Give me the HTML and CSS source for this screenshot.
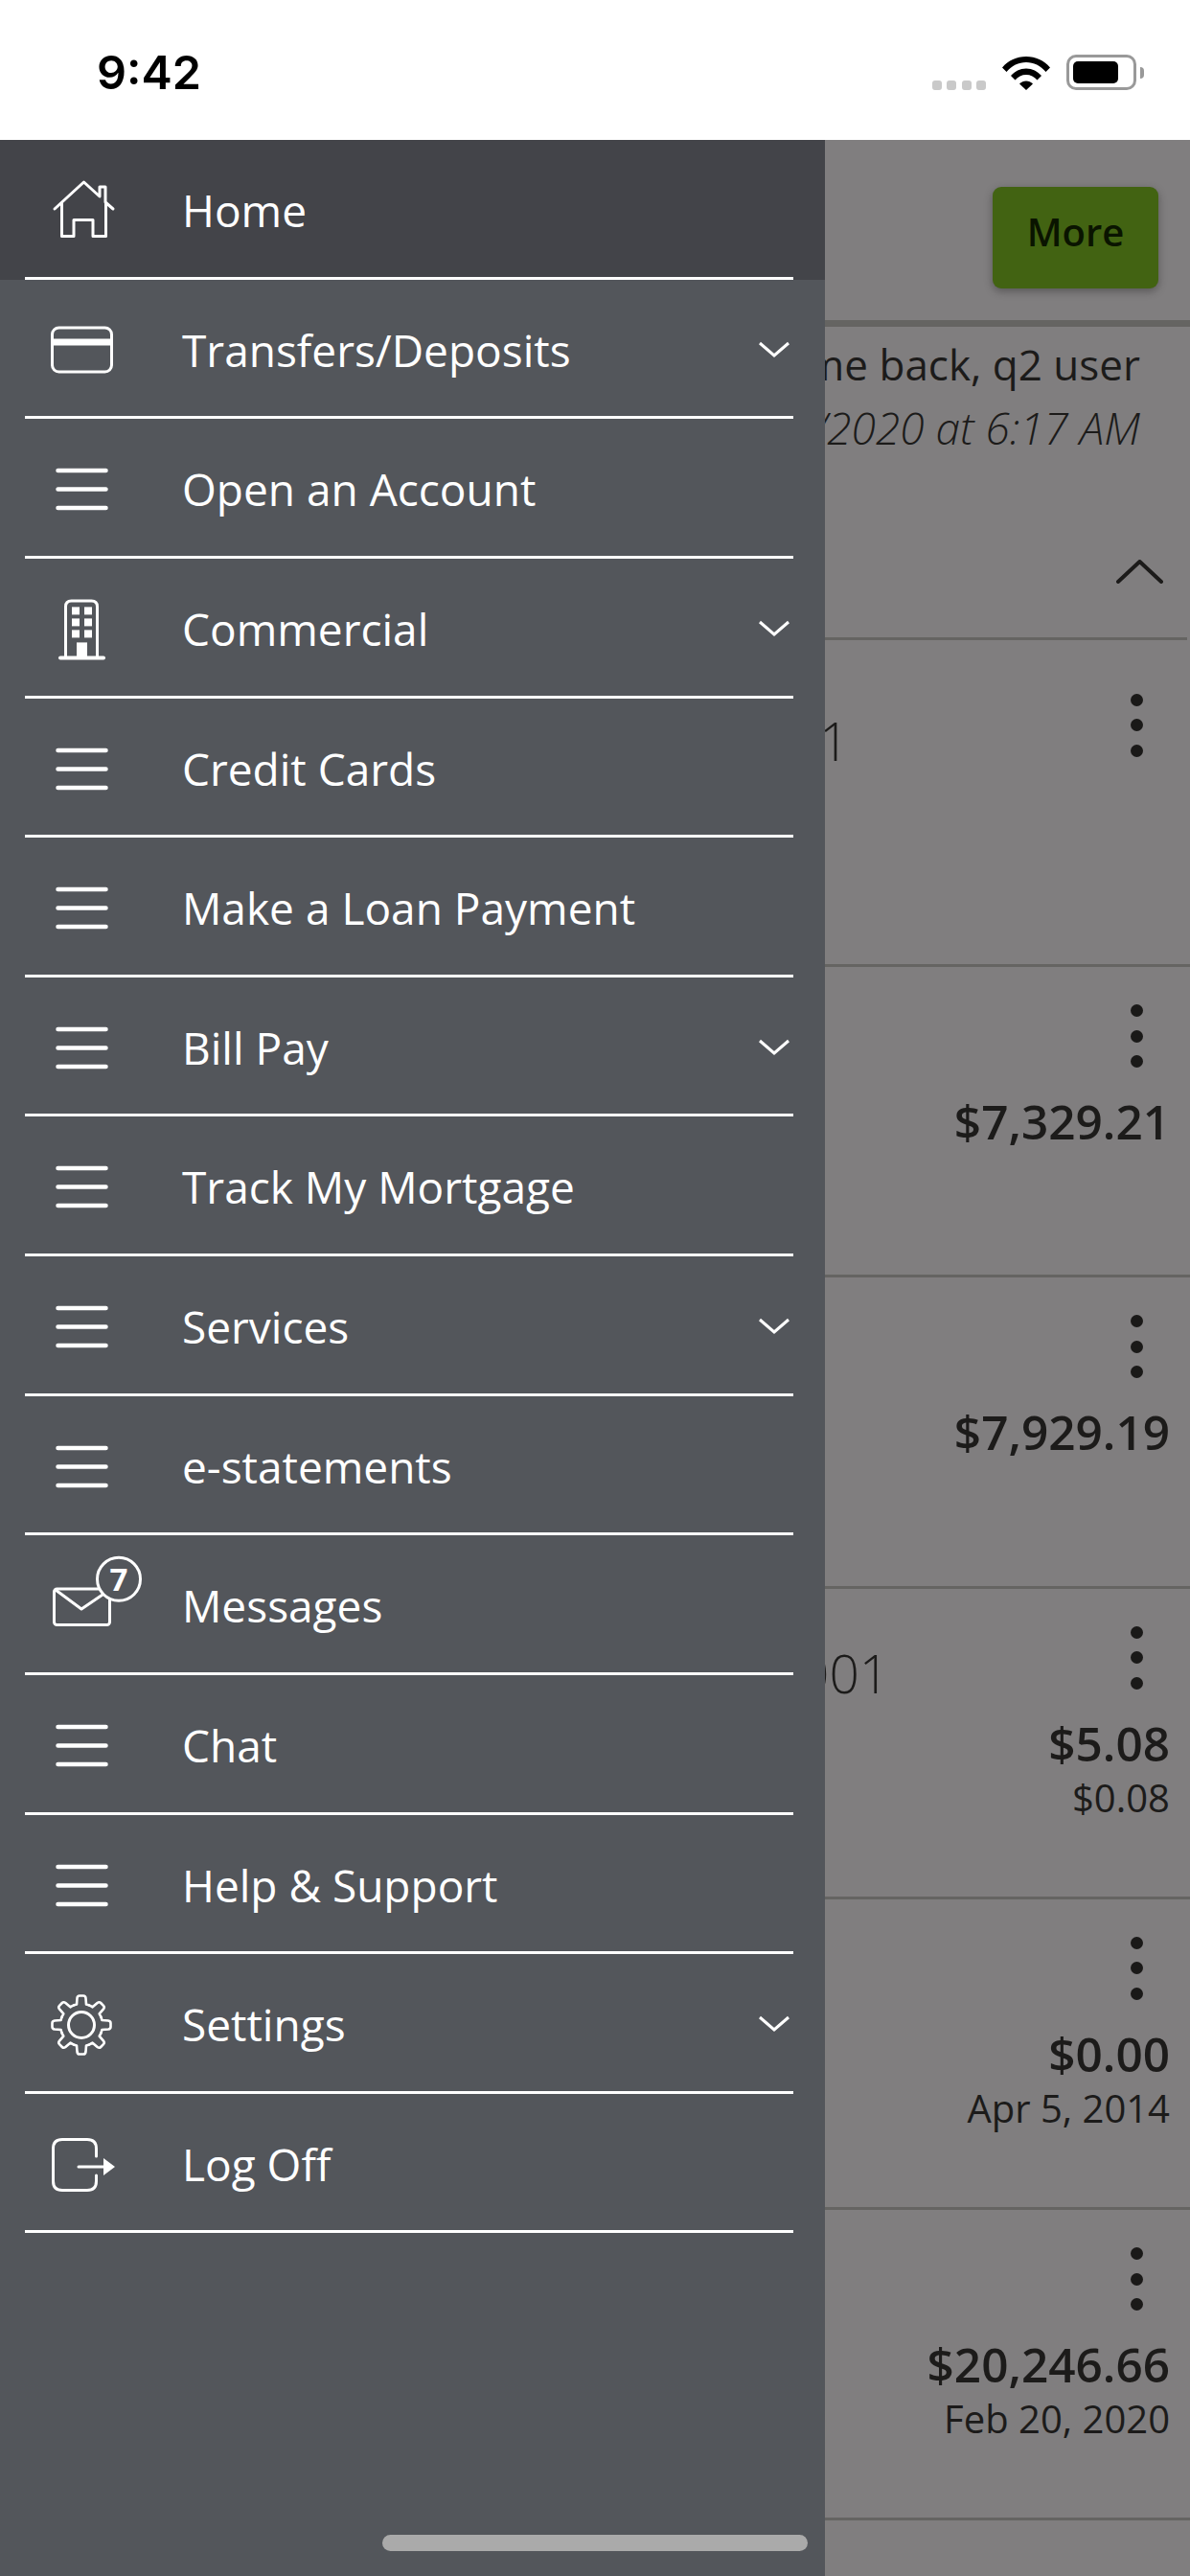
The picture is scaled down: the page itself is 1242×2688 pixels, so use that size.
FILE: index.html
```html
<!DOCTYPE html>
<html lang="en">
<head>
<meta charset="utf-8">
<title>Menu</title>
<link rel="stylesheet" href="styles.css">
</head>
<body>
<div class="screen">
  <header class="status">
    <span class="time">9:42</span>
    <div class="status-icons">
      <div class="signal"><i></i><i></i><i></i><i></i></div>
      <svg class="wifi" width="50" height="37" viewBox="0 0 50 37"><path d="M0 13.5C6.500 6 15 2 25 2s18.500 4 25 11.500l-4.500 4.500C40 11.500 33 8 25 8S10 11.500 4.500 18z"/><path d="M9 22c4-4.500 9.500-7.500 16-7.500S37 17.500 41 22l-4.500 4.500C33.500 23 29.500 21 25 21s-8.500 2-11.500 5.500z"/><path d="M18 30.500c2-1.800 4.300-3 7-3s5 1.200 7 3L25 37z"/></svg>
      <div class="battery"><span class="battery-fill"></span></div>
      <span class="battery-nub"></span>
    </div>
  </header>
  <div class="app">
    <main class="content">
      <div class="topbar"><button class="more">More</button></div>
      <div class="welcome">
        <p class="welcome-name">Welcome back, q2 user</p>
        <p class="welcome-date">/2020 at 6:17 AM</p>
      </div>
      <div class="group-head">
        <svg width="49" height="25" viewBox="0 0 49 25"><path class="chev-dark" d="M2 23L24.500 2L47 23"/></svg>
      </div>
      <section class="acct acct-first">
        <div class="acct-name">1</div>
        <div class="acct-side"><span class="kebab"><i></i><i></i><i></i></span></div>
      </section>
      <section class="acct">
        <div class="acct-side"><span class="kebab"><i></i><i></i><i></i></span><span class="amount">$7,329.21</span></div>
      </section>
      <section class="acct">
        <div class="acct-side"><span class="kebab"><i></i><i></i><i></i></span><span class="amount">$7,929.19</span></div>
      </section>
      <section class="acct">
        <div class="acct-name acct-name-long">001</div>
        <div class="acct-side"><span class="kebab"><i></i><i></i><i></i></span><span class="amount">$5.08</span><span class="sub">$0.08</span></div>
      </section>
      <section class="acct">
        <div class="acct-side"><span class="kebab"><i></i><i></i><i></i></span><span class="amount">$0.00</span><span class="sub">Apr 5, 2014</span></div>
      </section>
      <section class="acct">
        <div class="acct-side"><span class="kebab"><i></i><i></i><i></i></span><span class="amount">$20,246.66</span><span class="sub">Feb 20, 2020</span></div>
      </section>
    </main>

    <nav class="drawer">
      <svg class="defs" width="0" height="0">
        <defs>
          <g id="burger"><path d="M20.500 26H70.500M20.500 45.500H70.500M20.500 65H70.500"/></g>
          <path id="chev" d="M2 2L17 15L32 2"/>
          <path id="tooth" d="M-8.420 -20.330A22 22 0 0 1 -5 -21.400L-4.500 -28Q-4.200 -30.500 -2 -30.500L2 -30.500Q4.200 -30.500 4.500 -28L5 -21.400A22 22 0 0 1 8.420 -20.330"/>
        </defs>
      </svg>
      <a class="item item-active"><span class="inner">
        <svg class="ico" viewBox="0 0 90 90"><path d="M17 44L47.500 16L64 31V21H70V37L78 44"/><path d="M24.500 38V72.500H37V55.500H57V72.500H70.500V38"/></svg>
        <span class="label">Home</span></span></a>
      <a class="item"><span class="inner">
        <svg class="ico" viewBox="0 0 90 90"><rect x="14.500" y="22" width="62" height="46" rx="7"/><rect class="solid" x="14.500" y="33.500" width="62" height="7"/></svg>
        <span class="label">Transfers/Deposits</span>
        <svg class="chev" viewBox="0 0 34 18"><use href="#chev"/></svg></span></a>
      <a class="item"><span class="inner">
        <svg class="ico" viewBox="0 0 90 90"><use href="#burger"/></svg>
        <span class="label">Open an Account</span></span></a>
      <a class="item"><span class="inner">
        <svg class="ico" viewBox="0 0 90 90"><path d="M28.500 75V22Q28.500 16 34.500 16H55.500Q61.500 16 61.500 22V75"/><path class="thick" d="M23 75.500H68"/><rect class="solid" x="35" y="22.400" width="8" height="8"/><rect class="solid" x="48" y="22.400" width="8" height="8"/><rect class="solid" x="35" y="34.400" width="8" height="8"/><rect class="solid" x="48" y="34.400" width="8" height="8"/><rect class="solid" x="35" y="46.400" width="8" height="8"/><rect class="solid" x="48" y="46.400" width="8" height="8"/><rect class="solid" x="40" y="59.400" width="11" height="15"/></svg>
        <span class="label">Commercial</span>
        <svg class="chev" viewBox="0 0 34 18"><use href="#chev"/></svg></span></a>
      <a class="item"><span class="inner">
        <svg class="ico" viewBox="0 0 90 90"><use href="#burger"/></svg>
        <span class="label">Credit Cards</span></span></a>
      <a class="item"><span class="inner">
        <svg class="ico" viewBox="0 0 90 90"><use href="#burger"/></svg>
        <span class="label">Make a Loan Payment</span></span></a>
      <a class="item"><span class="inner">
        <svg class="ico" viewBox="0 0 90 90"><use href="#burger"/></svg>
        <span class="label">Bill Pay</span>
        <svg class="chev" viewBox="0 0 34 18"><use href="#chev"/></svg></span></a>
      <a class="item"><span class="inner">
        <svg class="ico" viewBox="0 0 90 90"><use href="#burger"/></svg>
        <span class="label">Track My Mortgage</span></span></a>
      <a class="item"><span class="inner">
        <svg class="ico" viewBox="0 0 90 90"><use href="#burger"/></svg>
        <span class="label">Services</span>
        <svg class="chev" viewBox="0 0 34 18"><use href="#chev"/></svg></span></a>
      <a class="item"><span class="inner">
        <svg class="ico" viewBox="0 0 90 90"><use href="#burger"/></svg>
        <span class="label">e-statements</span></span></a>
      <a class="item"><span class="inner">
        <svg class="ico" viewBox="0 0 90 90"><rect x="16.500" y="28" width="58" height="37.500" rx="3"/><path d="M18 29L45 49L70 32"/><circle class="badge" cx="84" cy="17.800" r="22.500"/><text class="badge-num" x="84" y="29.500">7</text></svg>
        <span class="label">Messages</span></span></a>
      <a class="item"><span class="inner">
        <svg class="ico" viewBox="0 0 90 90"><use href="#burger"/></svg>
        <span class="label">Chat</span></span></a>
      <a class="item"><span class="inner">
        <svg class="ico" viewBox="0 0 90 90"><use href="#burger"/></svg>
        <span class="label">Help &amp; Support</span></span></a>
      <a class="item"><span class="inner">
        <svg class="ico ico-gear" viewBox="0 0 90 90"><g transform="translate(45 46)"><use href="#tooth"/><use href="#tooth" transform="rotate(45)"/><use href="#tooth" transform="rotate(90)"/><use href="#tooth" transform="rotate(135)"/><use href="#tooth" transform="rotate(180)"/><use href="#tooth" transform="rotate(225)"/><use href="#tooth" transform="rotate(270)"/><use href="#tooth" transform="rotate(315)"/><circle r="13.500"/></g></svg>
        <span class="label">Settings</span>
        <svg class="chev" viewBox="0 0 34 18"><use href="#chev"/></svg></span></a>
      <a class="item"><span class="inner">
        <svg class="ico" viewBox="0 0 90 90"><path d="M60.500 37V29Q60.500 19.500 51 19.500H25Q15.500 19.500 15.500 29V63Q15.500 72.500 25 72.500H51Q60.500 72.500 60.500 63V57"/><path d="M42 48H70"/><path class="solid" d="M68 39L80 48L68 57z"/></svg>
        <span class="label">Log Off</span></span></a>
    </nav>
    <div class="home-bar"></div>
  </div>
</div>
</body>
</html>
```

FILE: styles.css
```css
* { box-sizing: border-box; }
html, body { margin: 0; padding: 0; }
body { width: 1242px; height: 2688px; overflow: hidden; font-family: "Open Sans", "Liberation Sans", sans-serif; background: #807e7f; }
p { margin: 0; }
.screen { width: 1242px; height: 2688px; display: flex; flex-direction: column; }

/* status bar */
.status { height: 146px; flex: none; background: #fff; position: relative; display: flex; justify-content: space-between; padding: 0 48px 0 101px; }
.time { font-family: Inter, "Liberation Sans", sans-serif; font-weight: 600; font-size: 48.500px; line-height: 50px; color: #000; margin-top: 51px; }
.status-icons { display: flex; align-items: flex-start; padding-top: 57px; }
.signal { display: flex; gap: 5.500px; margin-top: 27px; margin-right: 17px; }
.signal i { width: 10px; height: 10px; border-radius: 3px; background: #c9c9c9; }
.wifi { fill: #000; margin-right: 17px; }
.battery { width: 73px; height: 37px; border: 3px solid #999; border-radius: 10px; padding: 4px; }
.battery-fill { display: block; width: 47px; height: 100%; background: #000; border-radius: 5px; }
.battery-nub { width: 4px; height: 12px; background: #999; border-radius: 0 5px 5px 0; margin: 13px 0 0 4px; }

/* underlying page */
.app { flex: 1; position: relative; overflow: hidden; }
.content { background: #807e7f; color: #1c1b1a; }
.topbar { height: 195px; display: flex; justify-content: flex-end; align-items: flex-start; padding: 49px 33px 0 0; border-bottom: 7px solid #656462; }
.more { width: 173px; height: 106px; border: 0; border-radius: 9px; background: #426312; color: #0a1400; font: 600 40px/1 "Open Sans", sans-serif; padding: 0 0 12px; box-shadow: 0 3px 8px rgba(40, 40, 40, .45); }
.welcome { height: 142px; padding: 9px 52px 0 0; text-align: right; }
.welcome-name { font-size: 44px; line-height: 60px; }
.welcome-date { font-size: 46px; line-height: 60px; font-style: italic; font-weight: 300; margin-top: 6px; }
.group-head { height: 185px; margin-right: 3px; display: flex; justify-content: flex-end; align-items: flex-start; padding: 101px 25px 0 0; border-bottom: 3px solid #656462; }
.chev-dark { fill: none; stroke: #1c1b1a; stroke-width: 4; stroke-linecap: round; stroke-linejoin: round; }
.acct { height: 324.300px; border-bottom: 3px solid #656462; display: flex; justify-content: flex-end; padding: 39px 21px 0 0; }
.acct-first { height: 341px; padding-top: 55.500px; }
.acct-name { flex: 1; padding-left: 855px; font-weight: 300; font-size: 55px; line-height: 70px; margin-top: 14px; white-space: nowrap; }
.acct-name-long { padding-left: 834px; }
.acct-side { display: flex; flex-direction: column; align-items: flex-end; }
.kebab { display: flex; flex-direction: column; gap: 13.500px; margin-right: 28.500px; }
.kebab i { display: block; width: 13px; height: 13px; border-radius: 50%; background: #1a1918; }
.amount { font-size: 49.500px; font-weight: 600; line-height: 60px; margin-top: 26px; }
.sub { font-size: 40px; line-height: 54px; }

/* drawer */
.drawer { position: absolute; left: 0; top: 0; bottom: 0; width: 861px; background: #53565b; border-top: 1px solid #111; display: flex; flex-direction: column; color: #fff; }
.defs { position: absolute; }
.item { display: block; height: 145.640px; flex: none; padding: 0 33px 0 26px; }
.item-active { background: #434449; margin-top: -1px; }
.inner { display: flex; align-items: center; height: 100%; padding-top: 3.500px; border-bottom: 3.500px solid #fff; }
.ico { width: 90px; height: 90px; margin-left: 14px; margin-right: 60px; overflow: visible; flex: none; fill: none; stroke: #fff; stroke-width: 3; stroke-linecap: round; stroke-linejoin: round; }
.ico use { stroke-width: 4.500; }
.ico-gear use { stroke-width: 2.600; }
.ico .solid { fill: #fff; stroke: none; }
.ico .thick { stroke-width: 4; }
.ico .badge { fill: #53565b; stroke-width: 3; }
.ico .badge-num { fill: #fff; stroke: none; font: 700 33px "Open Sans", sans-serif; text-anchor: middle; }
.label { flex: 1; font-size: 46px; font-weight: 400; line-height: 60px; white-space: nowrap; }
.chev { width: 34px; height: 18px; margin-right: 3px; fill: none; stroke: #fff; stroke-width: 3; overflow: visible; }

.home-bar { position: absolute; left: 399px; top: 2499px; width: 444px; height: 17px; border-radius: 9px; background: #aaa; }
```
